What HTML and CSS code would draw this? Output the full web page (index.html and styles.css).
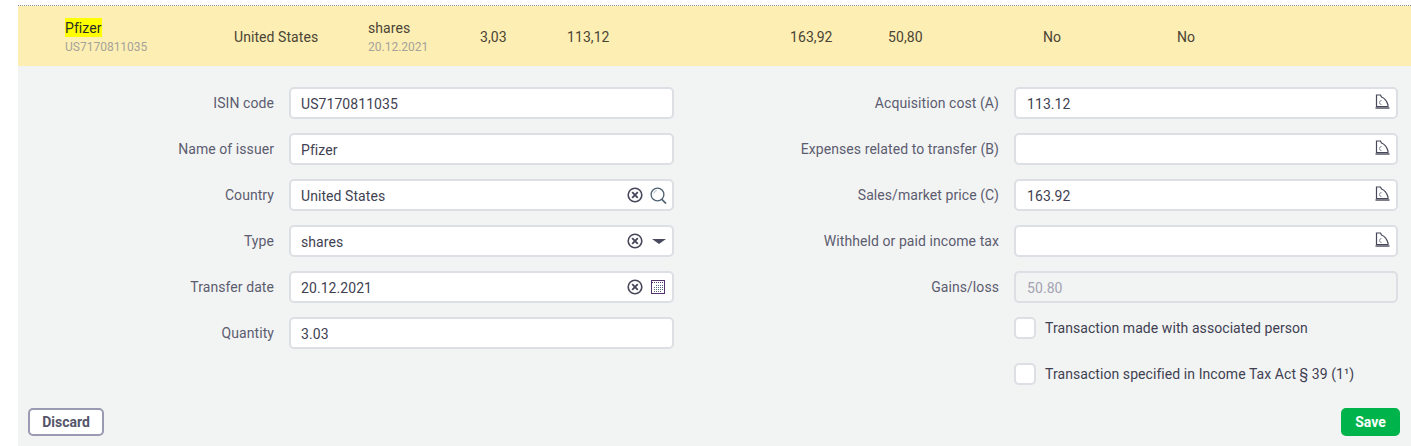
FILE: index.html
```html
<!DOCTYPE html>
<html lang="en">
<head>
    <meta charset="UTF-8">
    <title>Transfer of securities</title>
    <link rel="stylesheet" href="styles.css">
</head>
<body>
    <svg class="icon-defs" width="0" height="0">
        <symbol id="ico-clear" viewBox="0 0 16 16">
            <circle cx="8" cy="8" r="6.8" fill="none" stroke="#47475a" stroke-width="1.6"/>
            <path d="M5.2 5.2l5.6 5.6M10.8 5.2l-5.6 5.6" stroke="#47475a" stroke-width="1.9"/>
        </symbol>
        <symbol id="ico-search" viewBox="0 0 17 17">
            <circle cx="7.5" cy="7.5" r="6.4" fill="none" stroke="#4f6070" stroke-width="1.3"/>
            <path d="M3.8 6.5a3.8 3.8 0 0 1 3-3" fill="none" stroke="#b4bcc4" stroke-width="1"/>
            <path d="M11.5 12l4.5 4.5" stroke="#4f6070" stroke-width="1.7"/>
        </symbol>
        <symbol id="ico-calc" viewBox="0 0 15 15">
            <path d="M1.5 1H5.5L6.5 3C9.5 4 12 7.5 13 11V12.5H1.5z" fill="none" stroke="#47475a" stroke-width="1.2"/>
            <path d="M0.5 14h14" stroke="#47475a" stroke-width="1.4"/>
            <path d="M6.5 6.5a2 2 0 0 0 0 4" fill="none" stroke="#8a8a98" stroke-width="1"/>
        </symbol>
        <symbol id="ico-date" viewBox="0 0 14 14">
            <rect x=".5" y=".5" width="13" height="13" fill="none" stroke="#57336e"/>
            <path d="M1 2.5h12" stroke="#57336e" stroke-width="1.2" stroke-dasharray="1 1"/>
            <path d="M5 5.5h7M3 7.5h9M3 9.5h9M3 11.5h7" stroke="#56657a" stroke-dasharray="1 1"/>
        </symbol>
    </svg>

    <main class="entry">
        <div class="summary">
            <div class="cell c-name">
                <div><mark>Pfizer</mark></div>
                <div class="sub">US7170811035</div>
            </div>
            <div class="cell c-country">United States</div>
            <div class="cell c-type">
                <div>shares</div>
                <div class="sub">20.12.2021</div>
            </div>
            <div class="cell c-qty">3,03</div>
            <div class="cell c-cost">113,12</div>
            <div class="cell c-price">163,92</div>
            <div class="cell c-gain">50,80</div>
            <div class="cell c-assoc">No</div>
            <div class="cell c-spec">No</div>
        </div>

        <form class="edit">
            <div class="columns">
                <div class="col col-left">
                    <div class="field">
                        <label>ISIN code</label>
                        <div class="input"><span class="val">US7170811035</span></div>
                    </div>
                    <div class="field">
                        <label>Name of issuer</label>
                        <div class="input"><span class="val">Pfizer</span></div>
                    </div>
                    <div class="field">
                        <label>Country</label>
                        <div class="input">
                            <span class="val">United States</span>
                            <svg class="ico ico-x"><use href="#ico-clear"/></svg>
                            <span class="slot"><svg class="ico ico-s"><use href="#ico-search"/></svg></span>
                        </div>
                    </div>
                    <div class="field">
                        <label>Type</label>
                        <div class="input">
                            <span class="val">shares</span>
                            <svg class="ico ico-x"><use href="#ico-clear"/></svg>
                            <span class="slot"><span class="caret"></span></span>
                        </div>
                    </div>
                    <div class="field">
                        <label>Transfer date</label>
                        <div class="input">
                            <span class="val">20.12.2021</span>
                            <svg class="ico ico-x"><use href="#ico-clear"/></svg>
                            <span class="slot"><svg class="ico ico-d"><use href="#ico-date"/></svg></span>
                        </div>
                    </div>
                    <div class="field">
                        <label>Quantity</label>
                        <div class="input"><span class="val">3.03</span></div>
                    </div>
                </div>

                <div class="col col-right">
                    <div class="field">
                        <label>Acquisition cost (A)</label>
                        <div class="input">
                            <span class="val num">113.12</span>
                            <svg class="ico ico-c"><use href="#ico-calc"/></svg>
                        </div>
                    </div>
                    <div class="field">
                        <label>Expenses related to transfer (B)</label>
                        <div class="input">
                            <span class="val num"></span>
                            <svg class="ico ico-c"><use href="#ico-calc"/></svg>
                        </div>
                    </div>
                    <div class="field">
                        <label>Sales/market price (C)</label>
                        <div class="input">
                            <span class="val num">163.92</span>
                            <svg class="ico ico-c"><use href="#ico-calc"/></svg>
                        </div>
                    </div>
                    <div class="field">
                        <label>Withheld or paid income tax</label>
                        <div class="input">
                            <span class="val num"></span>
                            <svg class="ico ico-c"><use href="#ico-calc"/></svg>
                        </div>
                    </div>
                    <div class="field">
                        <label>Gains/loss</label>
                        <div class="input disabled"><span class="val num">50.80</span></div>
                    </div>
                    <div class="field check">
                        <span class="box"></span>
                        <span class="check-text">Transaction made with associated person</span>
                    </div>
                    <div class="field check">
                        <span class="box"></span>
                        <span class="check-text">Transaction specified in Income Tax Act § 39 (1¹)</span>
                    </div>
                </div>
            </div>

            <div class="actions">
                <button type="button" class="btn btn-discard">Discard</button>
                <button type="button" class="btn btn-save">Save</button>
            </div>
        </form>
    </main>
</body>
</html>
```

FILE: styles.css
```css
* {
    margin: 0;
    padding: 0;
    box-sizing: border-box;
}

body {
    font-family: Roboto, "Liberation Sans", sans-serif;
    font-size: 14px;
    letter-spacing: 0.07px;
    color: #3f3f52;
    background: #fff;
    padding: 5px 0 0 18px;
    height: 446px;
    overflow: hidden;
}

.icon-defs {
    position: absolute;
}

.entry {
    border-top: 1px dotted #8c8c8c;
}

/* Summary row */
.summary {
    display: flex;
    align-items: center;
    height: 60px;
    padding-top: 2px;
    background: #fdeeb3;
    color: #4a4436;
}

.cell {
    line-height: 20px;
    flex: none;
}

.sub {
    font-size: 12px;
    line-height: 18px;
    letter-spacing: 0;
    color: #a5a39a;
}

mark {
    display: inline-block;
    height: 19px;
    line-height: 20px;
    background: #ffff00;
    color: #2b2b2b;
}

.c-name { width: 169px; margin-left: 47px; }
.c-country { width: 134px; }
.c-type { width: 112px; }
.c-qty { width: 87px; }
.c-cost { width: 223px; }
.c-price { width: 98px; }
.c-gain { width: 155px; }
.c-assoc { width: 134px; }

/* Form */
.edit {
    background: #f2f4f3;
    height: 380px;
    position: relative;
}

.columns {
    display: flex;
    padding-top: 21px;
}

.col-left { width: 656px; }
.col-right { width: 724px; }

.field {
    display: flex;
    align-items: center;
    height: 32px;
    margin-bottom: 14px;
}

.field label {
    flex: none;
    text-align: right;
    color: #5c5c70;
}

.col-left label { width: 256px; margin-right: 15px; }
.col-right label { width: 325px; margin-right: 15px; }

.input {
    display: flex;
    align-items: center;
    height: 32px;
    background: #fff;
    border: 2px solid #dcdfe4;
    border-radius: 5px;
    padding-right: 5px;
}

.col-left .input { width: 385px; }
.col-right .input { width: 384px; }

.val {
    flex: 1;
    padding-left: 10px;
    color: #3f3f52;
    position: relative;
    top: 1px;
}

.val.num { padding-left: 11px; }

.disabled {
    background: #f2f4f3;
}

.disabled .val {
    color: #a3a3b2;
}

.ico {
    flex: none;
    display: block;
}

.slot {
    flex: none;
    width: 17px;
    display: flex;
    justify-content: center;
}

.ico-x { width: 16px; height: 16px; margin-right: 7px; margin-top: -1px; }
.ico-s { width: 17px; height: 17px; }
.ico-d { width: 14px; height: 14px; margin-right: 2px; }
.ico-c { width: 15px; height: 15px; margin-right: 1px; margin-top: -3px; }

.caret {
    width: 0;
    height: 0;
    border-left: 7px solid transparent;
    border-right: 7px solid transparent;
    border-top: 5px solid #4a4a5e;
}

.check {
    padding-left: 340px;
    height: 22px;
    margin-bottom: 24px;
}

.check:last-child {
    margin-bottom: 0;
}

.box {
    width: 22px;
    height: 22px;
    background: #fff;
    border: 2px solid #dcdfe4;
    border-radius: 5px;
    margin-right: 9px;
    flex: none;
}

.check-text {
    color: #3f3f52;
}

/* Buttons */
.actions {
    position: absolute;
    left: 10px;
    right: 11px;
    top: 342px;
    display: flex;
    justify-content: space-between;
}

.btn {
    font-family: Roboto, "Liberation Sans", sans-serif;
    font-size: 14px;
    font-weight: 700;
    height: 28px;
    border-radius: 5px;
    cursor: pointer;
}

.btn-discard {
    width: 76px;
    background: #fff;
    color: #55556a;
    border: 2px solid #9a9ab2;
}

.btn-save {
    width: 59px;
    background: #00b44b;
    color: #fff;
    border: none;
}
```
